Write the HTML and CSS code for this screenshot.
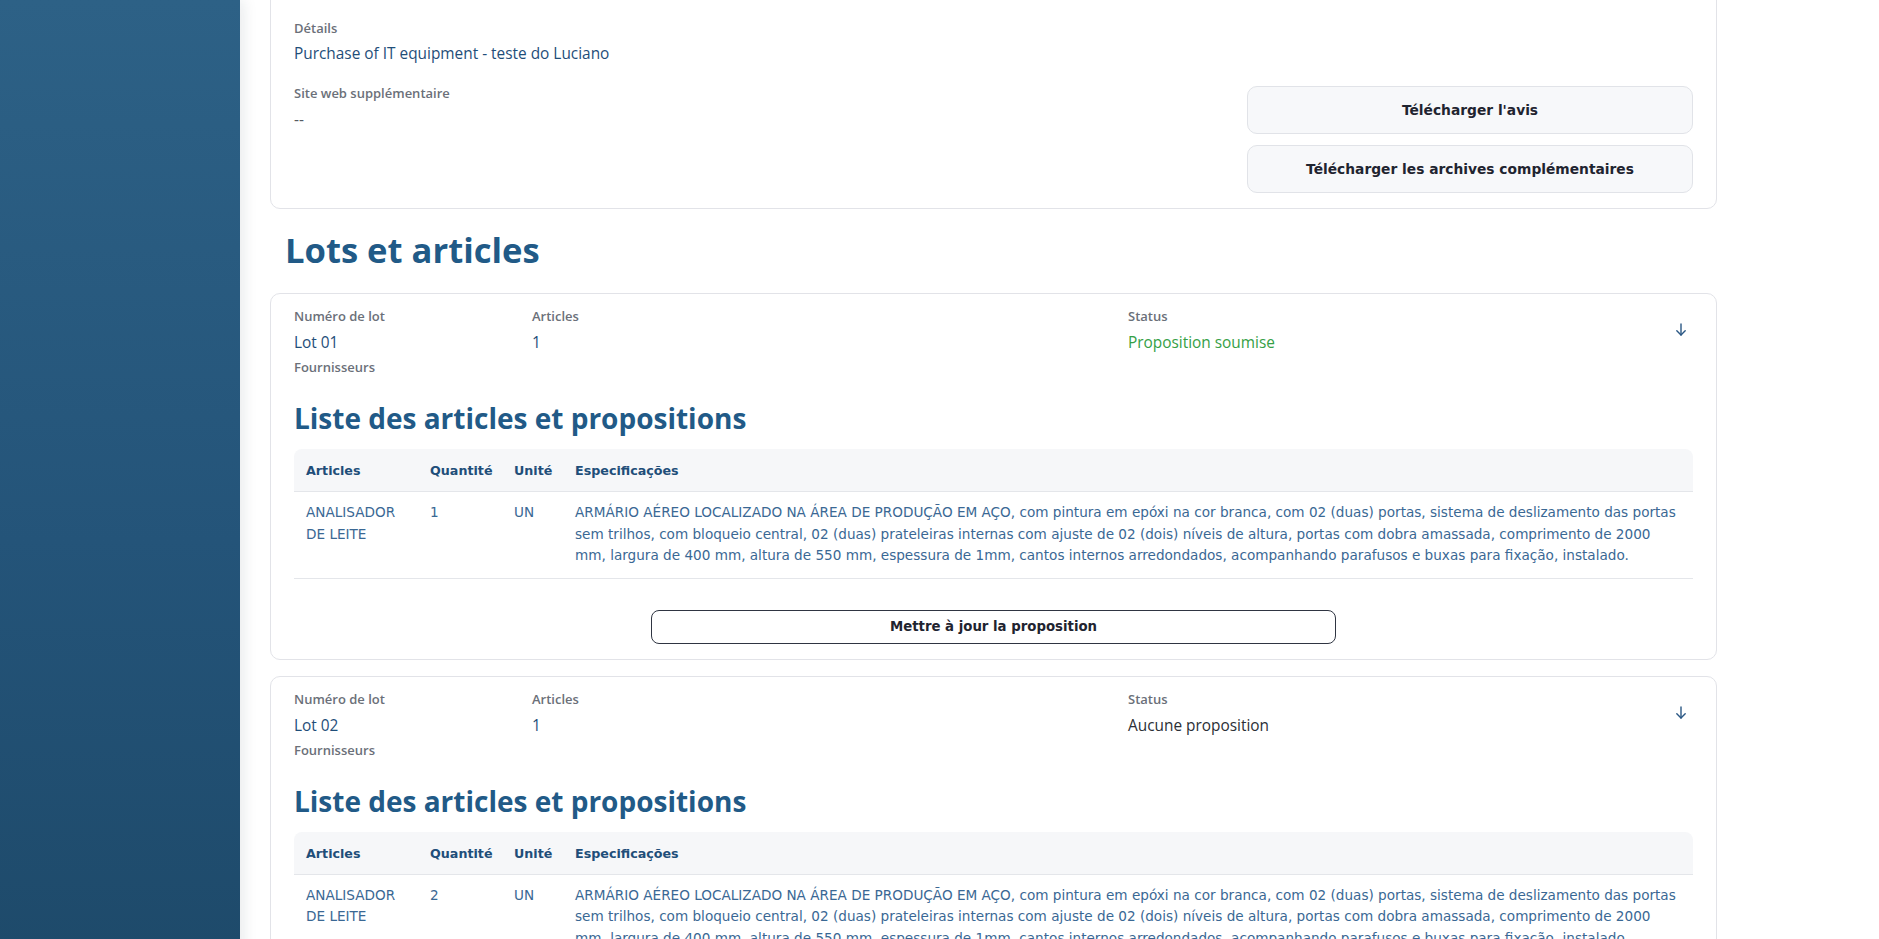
FILE: index.html
```html
<!DOCTYPE html>
<html lang="fr">
<head>
<meta charset="utf-8">
<title>Lots et articles</title>
<link rel="stylesheet" href="styles.css">
</head>
<body>
<div class="app">
  <aside class="sidebar"></aside>
  <main class="main">
    <div class="content">
      <section class="card details">
        <div class="details-info">
          <div class="field">
            <div class="label">Détails</div>
            <div class="value">Purchase of IT equipment - teste do Luciano</div>
          </div>
          <div class="field field-gap">
            <div class="label">Site web supplémentaire</div>
            <div class="value muted">--</div>
          </div>
        </div>
        <div class="details-actions">
          <button class="btn-soft" type="button">Télécharger l'avis</button>
          <button class="btn-soft" type="button">Télécharger les archives complémentaires</button>
        </div>
      </section>

      <h1 class="section-title">Lots et articles</h1>

      <section class="card lot">
        <div class="lot-head">
          <div class="lot-col lot-col-num">
            <div class="label">Numéro de lot</div>
            <div class="value value-gap">Lot 01</div>
            <div class="label label-gap">Fournisseurs</div>
          </div>
          <div class="lot-col lot-col-art">
            <div class="label">Articles</div>
            <div class="value value-gap">1</div>
          </div>
          <div class="lot-col lot-col-status">
            <div class="label">Status</div>
            <div class="value value-gap status-ok">Proposition soumise</div>
          </div>
          <button class="toggle" type="button" aria-label="Ouvrir">
            <svg width="12" height="13" viewBox="0 0 12 13" fill="none" stroke="currentColor" stroke-width="1.4" stroke-linecap="round" stroke-linejoin="round"><path d="M6 1v11"/><path d="M1.8 7.8 6 12l4.2-4.2"/></svg>
          </button>
        </div>
        <h2 class="list-title">Liste des articles et propositions</h2>
        <table class="items">
          <colgroup><col class="c-art"><col class="c-qty"><col class="c-unit"><col></colgroup>
          <thead>
            <tr><th>Articles</th><th>Quantité</th><th>Unité</th><th>Especificações</th></tr>
          </thead>
          <tbody>
            <tr>
              <td>ANALISADOR DE LEITE</td>
              <td>1</td>
              <td>UN</td>
              <td>ARMÁRIO AÉREO LOCALIZADO NA ÁREA DE PRODUÇÃO EM AÇO, com pintura em epóxi na cor branca, com 02 (duas) portas, sistema de deslizamento das portas sem trilhos, com bloqueio central, 02 (duas) prateleiras internas com ajuste de 02 (dois) níveis de altura, portas com dobra amassada, comprimento de 2000 mm, largura de 400 mm, altura de 550 mm, espessura de 1mm, cantos internos arredondados, acompanhando parafusos e buxas para fixação, instalado.</td>
            </tr>
          </tbody>
        </table>
        <div class="lot-actions">
          <button class="btn-outline" type="button">Mettre à jour la proposition</button>
        </div>
      </section>

      <section class="card lot">
        <div class="lot-head">
          <div class="lot-col lot-col-num">
            <div class="label">Numéro de lot</div>
            <div class="value value-gap">Lot 02</div>
            <div class="label label-gap">Fournisseurs</div>
          </div>
          <div class="lot-col lot-col-art">
            <div class="label">Articles</div>
            <div class="value value-gap">1</div>
          </div>
          <div class="lot-col lot-col-status">
            <div class="label">Status</div>
            <div class="value value-gap status-none">Aucune proposition</div>
          </div>
          <button class="toggle" type="button" aria-label="Ouvrir">
            <svg width="12" height="13" viewBox="0 0 12 13" fill="none" stroke="currentColor" stroke-width="1.4" stroke-linecap="round" stroke-linejoin="round"><path d="M6 1v11"/><path d="M1.8 7.8 6 12l4.2-4.2"/></svg>
          </button>
        </div>
        <h2 class="list-title">Liste des articles et propositions</h2>
        <table class="items">
          <colgroup><col class="c-art"><col class="c-qty"><col class="c-unit"><col></colgroup>
          <thead>
            <tr><th>Articles</th><th>Quantité</th><th>Unité</th><th>Especificações</th></tr>
          </thead>
          <tbody>
            <tr>
              <td>ANALISADOR DE LEITE</td>
              <td>2</td>
              <td>UN</td>
              <td>ARMÁRIO AÉREO LOCALIZADO NA ÁREA DE PRODUÇÃO EM AÇO, com pintura em epóxi na cor branca, com 02 (duas) portas, sistema de deslizamento das portas sem trilhos, com bloqueio central, 02 (duas) prateleiras internas com ajuste de 02 (dois) níveis de altura, portas com dobra amassada, comprimento de 2000 mm, largura de 400 mm, altura de 550 mm, espessura de 1mm, cantos internos arredondados, acompanhando parafusos e buxas para fixação, instalado.</td>
            </tr>
          </tbody>
        </table>
        <div class="lot-actions">
          <button class="btn-outline" type="button">Soumettre une proposition</button>
        </div>
      </section>
    </div>
  </main>
</div>
</body>
</html>
```
FILE: styles.css
```css
* { box-sizing: border-box; }

html, body {
  margin: 0;
  padding: 0;
  background: #ffffff;
}

body {
  font-family: "Open Sans", "Noto Sans", sans-serif;
  color: #1f4e79;
}

.app {
  display: flex;
  min-height: 100vh;
}

.sidebar {
  flex: 0 0 240px;
  width: 240px;
  min-height: 100vh;
  background: linear-gradient(180deg, #2d6186 0%, #245479 50%, #1c4766 100%);
  box-shadow: 3px 0 14px rgba(20, 40, 60, 0.10);
  position: relative;
  z-index: 1;
}

.main {
  flex: 1 1 auto;
  padding: 0 0 40px 30px;
  overflow: hidden;
}

.content {
  width: 1447px;
}

/* cards */
.card {
  background: #ffffff;
  border: 1px solid #e2e3e8;
  border-radius: 10px;
  padding: 13px 23px 15px;
}

.details {
  margin-top: -30px;
  padding-top: 48px;
  display: flex;
  justify-content: space-between;
  align-items: flex-start;
}

.field-gap { margin-top: 19px; }

.label {
  font-size: 13px;
  line-height: 18px;
  color: #6b7079;
  font-weight: 600;
}

.value {
  font-size: 15.4px;
  line-height: 22px;
  color: #1f4e79;
  font-weight: 500;
  margin-top: 6px;
}

.value.muted {
  color: #555a62;
  margin-top: 7px;
}

.details-actions {
  width: 446px;
  margin-top: 67px;
  display: flex;
  flex-direction: column;
  gap: 11px;
}

.btn-soft {
  height: 48px;
  width: 100%;
  background: #f7f8fa;
  border: 1px solid #e1e3e8;
  border-radius: 10px;
  font-family: "DejaVu Sans", sans-serif;
  font-weight: 700;
  font-size: 13.8px;
  color: #1f2430;
  cursor: pointer;
}

.section-title {
  margin: 19px 0 21px 15px;
  font-size: 34.6px;
  line-height: 44px;
  font-weight: 700;
  color: #215a87;
}

/* lots */
.lot + .lot { margin-top: 16px; }

.lot-head {
  display: flex;
  align-items: flex-start;
}

.lot-col-num { flex: 0 0 238px; }
.lot-col-art { flex: 0 0 596px; }
.lot-col-status { flex: 1 1 auto; }

.value-gap { margin-top: 7px; }
.label-gap { margin-top: 4px; }

.status-ok { color: #35a046; }
.status-none { color: #2b2f36; }

.toggle {
  flex: 0 0 24px;
  width: 24px;
  height: 24px;
  margin-top: 16px;
  padding: 0;
  border: 0;
  background: transparent;
  color: #2a5784;
  display: flex;
  align-items: flex-start;
  justify-content: center;
  cursor: pointer;
}

.list-title {
  margin: 24px 0 13px;
  font-size: 28px;
  line-height: 36px;
  font-weight: 700;
  color: #215a87;
}

/* table */
.items {
  width: 100%;
  border-collapse: separate;
  border-spacing: 0;
  table-layout: fixed;
}

.c-art { width: 124px; }
.c-qty { width: 84px; }
.c-unit { width: 61px; }

.items th {
  background: #f6f7f9;
  text-align: left;
  font-family: "DejaVu Sans", sans-serif;
  font-weight: 700;
  font-size: 12.7px;
  line-height: 19px;
  color: #1f4e79;
  padding: 12px 12px 11px;
  border-bottom: 1px solid #e4e6ea;
}

.items th:first-child { border-top-left-radius: 8px; }
.items th:last-child { border-top-right-radius: 8px; }

.items td {
  font-family: "DejaVu Sans", sans-serif;
  font-weight: 400;
  font-size: 13.6px;
  line-height: 21.5px;
  color: #3a6894;
  padding: 10px 12px 11px;
  vertical-align: top;
  border-bottom: 1px solid #e4e6ea;
}

.lot-actions {
  display: flex;
  justify-content: center;
  margin-top: 31px;
}

.btn-outline {
  width: 49%;
  height: 34px;
  background: #ffffff;
  border: 1px solid #2f3542;
  border-radius: 8px;
  font-family: "DejaVu Sans", sans-serif;
  font-weight: 700;
  font-size: 13.3px;
  color: #1f2430;
  cursor: pointer;
}
```
